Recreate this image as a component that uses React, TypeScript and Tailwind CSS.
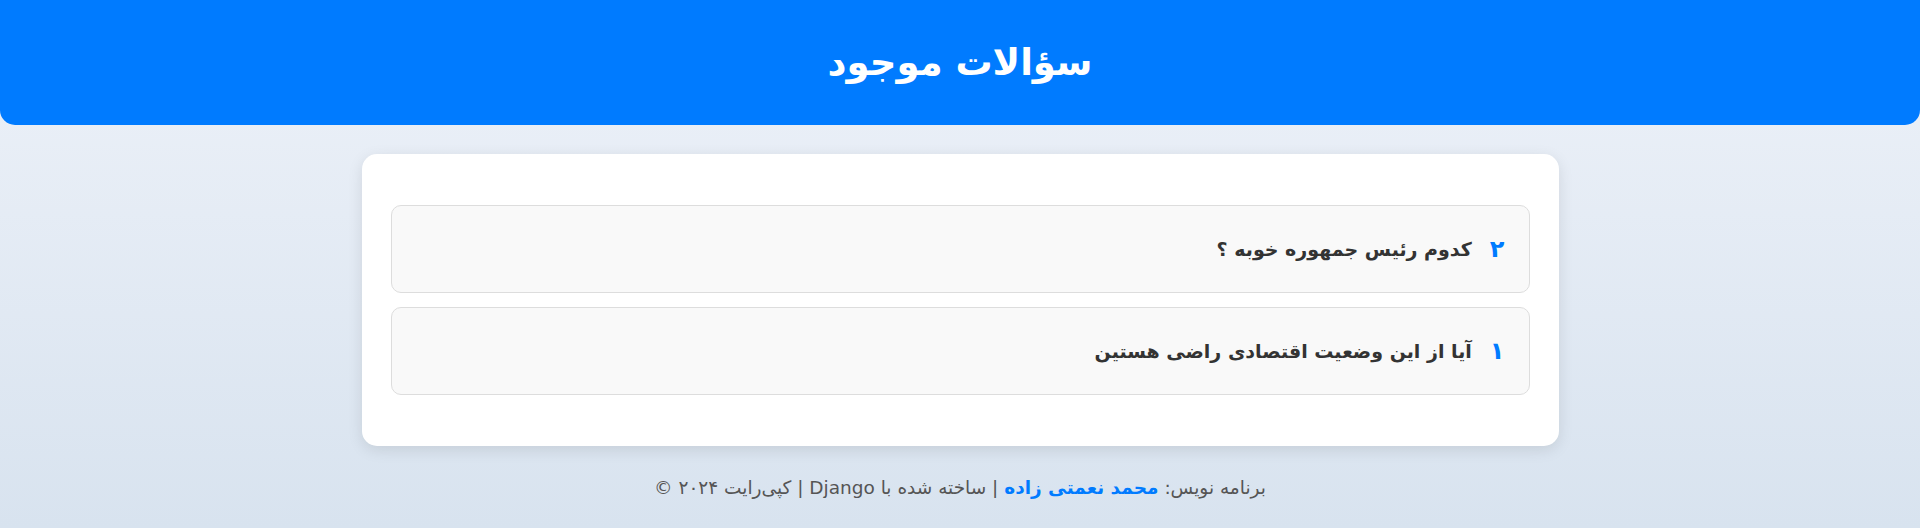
const questions = [
  { id: 2, text: "کدوم رئیس جمهوره خوبه ؟" },
  { id: 1, text: "آیا از این وضعیت اقتصادی راضی هستین" },
];

const toPersian = (n: number) =>
  String(n).replace(/\d/g, (d) => "۰۱۲۳۴۵۶۷۸۹"[Number(d)]);

export default function App() {
  return (
    <div
      dir="rtl"
      className="min-h-[528px] bg-gradient-to-b from-[#eef2f9] to-[#d8e3ef] font-['DejaVu_Sans',sans-serif] text-[#333]"
    >
      <header className="rounded-b-[15px] bg-[#007bff] py-10 text-center">
        <h1 className="text-[37px] font-bold leading-[45px] text-white">
          سؤالات موجود
        </h1>
      </header>

      <main className="mx-auto mt-[29px] w-[1197px] rounded-[15px] bg-white px-[29px] py-[51px] shadow-[0_4px_15px_rgba(0,0,0,0.1)]">
        <ul className="flex flex-col gap-[14px]">
          {questions.map((q) => (
            <li
              key={q.id}
              className="flex h-[88px] items-center gap-[18px] rounded-[10px] border border-[#dddddd] bg-[#f9f9f9] px-6"
            >
              <span className="text-[24px] font-bold leading-none text-[#007bff]">
                {toPersian(q.id)}
              </span>
              <span className="text-[19px] font-bold text-[#333]">
                {q.text}
              </span>
            </li>
          ))}
        </ul>
      </main>

      <footer className="mt-[30px] text-center text-[18.5px] leading-6 text-[#555]">
        برنامه نویس:{" "}
        <a href="#" className="font-bold text-[#007bff]">
          محمد نعمتی زاده
        </a>{" "}
        | ساخته شده با Django | کپی‌رایت ۲۰۲۴ ©
      </footer>
    </div>
  );
}
